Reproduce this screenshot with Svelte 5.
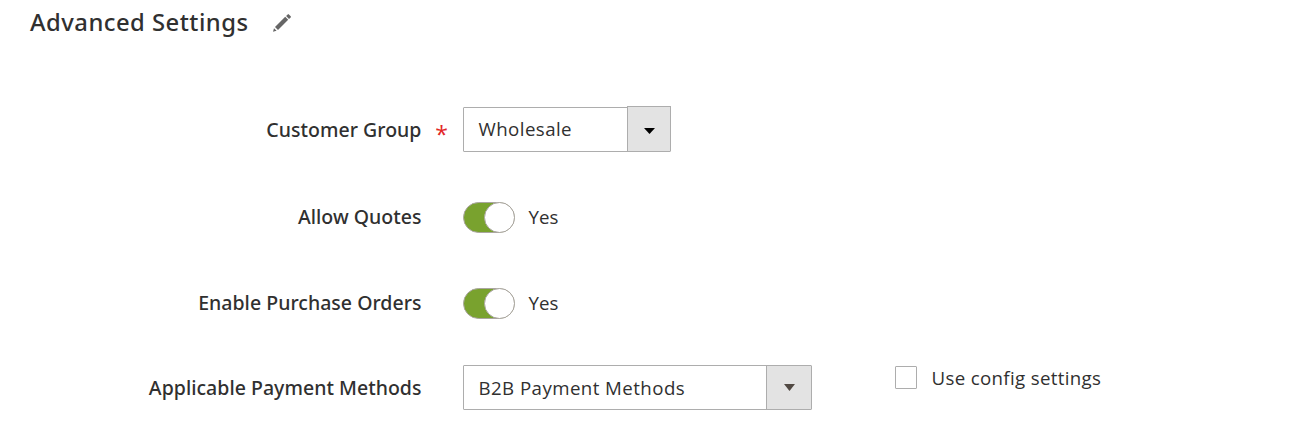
<script lang="ts">
  let customerGroup = $state('Wholesale');
  let paymentMethod = $state('B2B Payment Methods');
  let useConfig = $state(false);
  let toggles = $state([
    { label: 'Allow Quotes', enabled: true },
    { label: 'Enable Purchase Orders', enabled: true }
  ]);
</script>

<section class="settings">
  <header class="header">
    <h2 class="title">Advanced Settings</h2>
    <svg class="pencil" width="20" height="20" viewBox="0 0 20 20" aria-hidden="true">
      <path d="M1 18.8 L2 15.2 L4.6 17.8 Z M3 14 L13.2 3.8 L16.2 6.8 L6 17 Z M14.1 2.9 L15.7 1.4 Q16.3 .8 16.9 1.4 L18.7 3.2 Q19.2 3.8 18.7 4.4 L17 5.9 Z" />
    </svg>
  </header>

  <div class="field group-field">
    <span class="label required">Customer Group</span>
    <button class="select group-select" type="button">
      <span class="value">{customerGroup}</span>
      <span class="arrow">
        <svg width="11" height="6" viewBox="0 0 11 6"><path d="M0 0H11L5.5 6Z" /></svg>
      </span>
    </button>
  </div>

  {#each toggles as toggle}
    <div class="field toggle-field">
      <span class="label">{toggle.label}</span>
      <button
        class="switch"
        class:on={toggle.enabled}
        type="button"
        aria-label={toggle.label}
        onclick={() => (toggle.enabled = !toggle.enabled)}
      >
        <span class="knob"></span>
      </button>
      <span class="state">{toggle.enabled ? 'Yes' : 'No'}</span>
    </div>
  {/each}

  <div class="field payment-field">
    <span class="label">Applicable Payment Methods</span>
    <button class="select payment-select" type="button">
      <span class="value">{paymentMethod}</span>
      <span class="arrow">
        <svg width="11" height="7" viewBox="0 0 11 7"><path d="M0 0H11L5.5 7Z" /></svg>
      </span>
    </button>
    <label class="config">
      <input type="checkbox" bind:checked={useConfig} />
      <span>Use config settings</span>
    </label>
  </div>
</section>

<style>
  :global(body) { background: #ffffff; }

  .settings {
    box-sizing: border-box;
    height: 437px;
    overflow: hidden;
    font-family: 'Open Sans', sans-serif;
    font-size: 18.7px;
    line-height: 26px;
    color: #303030;
  }

  .header {
    display: flex;
    align-items: center;
    height: 46px;
    padding-left: 30px;
    margin-bottom: 60px;
  }

  .title {
    margin: -2px 0 0;
    font-family: 'Noto Sans', sans-serif;
    font-size: 23.8px;
    font-weight: 500;
    letter-spacing: 0.48px;
    white-space: nowrap;
    width: 242px;
  }

  .pencil { fill: #666666; }

  .field { display: flex; align-items: center; }

  .group-field { height: 46px; margin-bottom: 50px; }

  .toggle-field { height: 31px; margin-bottom: 55px; }

  .payment-field { height: 45px; margin-top: -9px; }

  .label {
    position: relative;
    box-sizing: border-box;
    width: 463px;
    padding-right: 41.5px;
    flex-shrink: 0;
    text-align: right;
    font-family: 'Noto Sans', sans-serif;
    font-size: 19.5px;
    font-weight: 500;
    letter-spacing: 0.03px;
    white-space: nowrap;
  }

  .group-field .label { margin-top: 2px; }

  .toggle-field .label, .state { margin-top: -2px; }

  .required::after {
    content: '*';
    position: absolute;
    right: 15px;
    top: 4px;
    color: #e22626;
    font-family: 'Open Sans', sans-serif;
    font-size: 23px;
    font-weight: 400;
  }

  .select {
    display: flex;
    box-sizing: border-box;
    height: 45px;
    padding: 0;
    border: 1px solid #adadad;
    border-radius: 1px;
    background: #ffffff;
    font: inherit;
    letter-spacing: 0.43px;
    color: inherit;
    text-align: left;
  }

  .value { flex: 1; padding: 8px 0 0 14.5px; white-space: nowrap; }

  .payment-select .value { padding-top: 9px; }

  .arrow {
    display: flex;
    align-items: center;
    justify-content: center;
    box-sizing: border-box;
    width: 45px;
    border-left: 1px solid #adadad;
    background: #e3e3e3;
    fill: #514943;
  }

  .group-select { width: 208px; align-self: flex-end; }

  .group-select .arrow {
    width: 43px;
    margin-top: -2px;
    border-top: 1px solid #adadad;
    padding-top: 4px;
    fill: #000000;
    box-shadow: 1px 0 #adadad;
  }

  .payment-select { width: 349px; }

  .switch {
    display: flex;
    justify-content: flex-start;
    box-sizing: border-box;
    width: 52px;
    height: 31px;
    padding: 0;
    border: 1px solid #aaa6a0;
    border-radius: 16px;
    background: #e3e3e3;
  }

  .switch.on { justify-content: flex-end; background: #79a22e; }

  .knob {
    box-sizing: border-box;
    width: 31px;
    height: 31px;
    margin: -1px;
    border: 1px solid #aaa6a0;
    border-radius: 50%;
    background: #ffffff;
  }

  .state { margin-left: 13.5px; }

  .config {
    display: flex;
    align-items: center;
    margin: -20px 0 0 83px;
    letter-spacing: 0.33px;
    white-space: nowrap;
  }

  .config input {
    appearance: none;
    box-sizing: border-box;
    width: 22px;
    height: 23px;
    margin: 0 14.5px 0 0;
    border: 1px solid #adadad;
    border-radius: 1px;
    background: #ffffff;
  }

  .config input:checked { background: #514943; }
</style>
